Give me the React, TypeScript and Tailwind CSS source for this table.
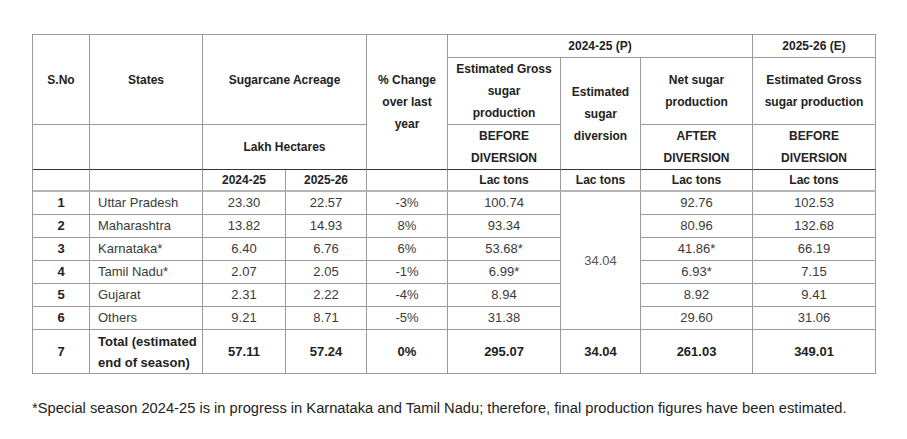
const rows = [
  { no: "1", state: "Uttar Pradesh", a: "23.30", b: "22.57", ch: "-3%", gross: "100.74", net: "92.76", next: "102.53" },
  { no: "2", state: "Maharashtra", a: "13.82", b: "14.93", ch: "8%", gross: "93.34", net: "80.96", next: "132.68" },
  { no: "3", state: "Karnataka*", a: "6.40", b: "6.76", ch: "6%", gross: "53.68*", net: "41.86*", next: "66.19" },
  { no: "4", state: "Tamil Nadu*", a: "2.07", b: "2.05", ch: "-1%", gross: "6.99*", net: "6.93*", next: "7.15" },
  { no: "5", state: "Gujarat", a: "2.31", b: "2.22", ch: "-4%", gross: "8.94", net: "8.92", next: "9.41" },
  { no: "6", state: "Others", a: "9.21", b: "8.71", ch: "-5%", gross: "31.38", net: "29.60", next: "31.06" },
];

// header cells: bold, centered, grey grid lines
const th = "border-r border-b border-[#9a9a9a] text-center align-middle font-bold text-[12px] leading-[22px] text-[#222] px-1";
// cells that sit on the dark rule under the header block
const thDark = "border-r border-b border-r-[#9a9a9a] border-b-[#333] text-center align-middle font-bold text-[12px] leading-[22px] text-[#222] px-1";
const thYear = "border-r border-b-2 border-r-[#9a9a9a] border-b-[#b5b5b5] text-center align-middle font-bold text-[12px] leading-[20px] text-[#222]";
const td = "border-r border-b border-[#9a9a9a] text-center align-middle text-[13px] leading-[22px] text-[#3a3a3a]";
const tdBold = "border-r border-b border-[#9a9a9a] text-center align-middle font-bold text-[13px] text-[#222]";

export default function App() {
  return (
    <div className="min-h-screen bg-white pt-[34px] pl-[32px]" style={{ fontFamily: '"Liberation Sans", Arial, sans-serif' }}>
      <table className="w-[843px] table-fixed border-separate border-spacing-0 border-l border-t border-[#9a9a9a]">
        <colgroup>
          <col className="w-[57px]" />
          <col className="w-[113px]" />
          <col className="w-[83px]" />
          <col className="w-[81px]" />
          <col className="w-[81px]" />
          <col className="w-[113px]" />
          <col className="w-[80px]" />
          <col className="w-[112px]" />
          <col className="w-[123px]" />
        </colgroup>
        <thead>
          <tr className="h-[23px]">
            <th rowSpan={2} className={th}>S.No</th>
            <th rowSpan={2} className={th}>States</th>
            <th rowSpan={2} colSpan={2} className={th}>Sugarcane Acreage</th>
            <th rowSpan={3} className={thDark}>
              % Change
              <br />
              over last
              <br />
              year
            </th>
            <th colSpan={3} className={th}>2024-25 (P)</th>
            <th className={th}>2025-26 (E)</th>
          </tr>
          <tr className="h-[67px]">
            <th className={th}>
              Estimated Gross
              <br />
              sugar
              <br />
              production
            </th>
            <th rowSpan={2} className={thDark}>
              Estimated
              <br />
              sugar
              <br />
              diversion
            </th>
            <th className={th}>
              Net sugar
              <br />
              production
            </th>
            <th className={th}>
              Estimated Gross
              <br />
              sugar production
            </th>
          </tr>
          <tr className="h-[45px]">
            <th className={thDark}></th>
            <th className={thDark}></th>
            <th colSpan={2} className={thDark}>Lakh Hectares</th>
            <th className={thDark}>
              BEFORE
              <br />
              DIVERSION
            </th>
            <th className={thDark}>
              AFTER
              <br />
              DIVERSION
            </th>
            <th className={thDark}>
              BEFORE
              <br />
              DIVERSION
            </th>
          </tr>
          <tr className="h-[22px]">
            <th className={thYear}></th>
            <th className={thYear}></th>
            <th className={thYear}>2024-25</th>
            <th className={thYear}>2025-26</th>
            <th className={thYear}></th>
            <th className={thYear}>Lac tons</th>
            <th className={thYear}>Lac tons</th>
            <th className={thYear}>Lac tons</th>
            <th className={thYear}>Lac tons</th>
          </tr>
        </thead>
        <tbody>
          {rows.map((r, i) => (
            <tr key={r.no} className="h-[23px]">
              <td className={`${td} font-bold text-[#222] text-[12px]`}>{r.no}</td>
              <td className={`${td} text-left pl-2`}>{r.state}</td>
              <td className={td}>{r.a}</td>
              <td className={td}>{r.b}</td>
              <td className={td}>{r.ch}</td>
              <td className={td}>{r.gross}</td>
              {i === 0 && (
                <td rowSpan={6} className={`${td} text-[#555]`}>
                  34.04
                </td>
              )}
              <td className={td}>{r.net}</td>
              <td className={td}>{r.next}</td>
            </tr>
          ))}
          <tr className="h-[44px]">
            <td className={`${tdBold} text-[12px]`}>7</td>
            <td className={`${tdBold} text-left pl-2 leading-[21px]`}>
              Total (estimated
              <br />
              end of season)
            </td>
            <td className={tdBold}>57.11</td>
            <td className={tdBold}>57.24</td>
            <td className={tdBold}>0%</td>
            <td className={tdBold}>295.07</td>
            <td className={tdBold}>34.04</td>
            <td className={tdBold}>261.03</td>
            <td className={tdBold}>349.01</td>
          </tr>
        </tbody>
      </table>
      <p className="mt-[25px] text-[14.7px] leading-[18px] text-[#222]">
        *Special season 2024-25 is in progress in Karnataka and Tamil Nadu; therefore, final production figures have been estimated.
      </p>
    </div>
  );
}
